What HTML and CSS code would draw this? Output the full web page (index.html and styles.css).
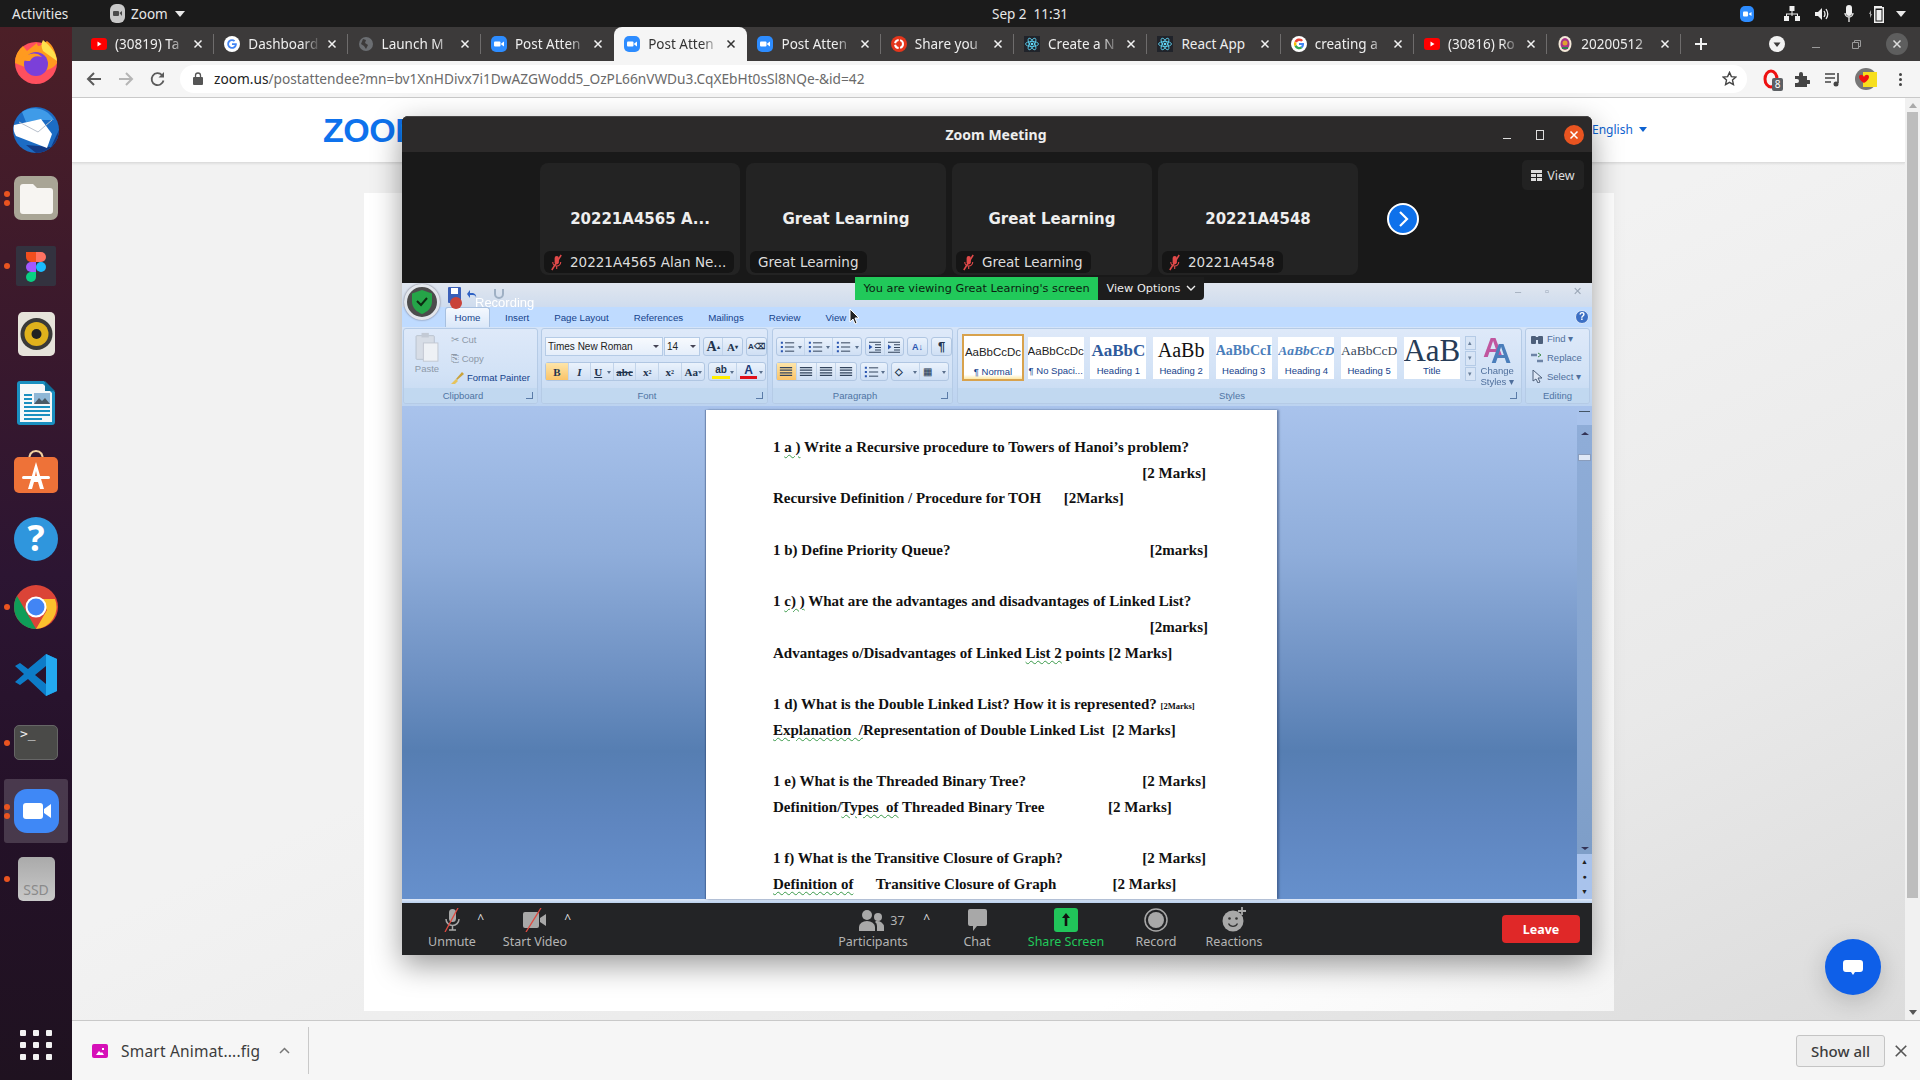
FILE: index.html
```html
<!DOCTYPE html>
<html lang="en">
<head>
    <meta charset="UTF-8">
    <title>Zoom Meeting</title>
    <link rel="stylesheet" href="styles.css">
</head>
<body>
<svg class="defs" width="0" height="0">
    <symbol id="i-x" viewBox="0 0 12 12"><path d="M2.500 2.500l7 7M9.500 2.500l-7 7" stroke="currentColor" stroke-width="1.500" fill="none"/></symbol>
    <symbol id="i-yt" viewBox="0 0 16 16"><rect y="2" width="16" height="12" rx="3" fill="#f00"/><path d="M6.500 5.500v5l4-2.500z" fill="#fff"/></symbol>
    <symbol id="i-g" viewBox="0 0 16 16"><circle cx="8" cy="8" r="8" fill="#fff"/><path d="M8 3.200a4.800 4.800 0 0 1 3.200 1.200l-1.300 1.300A3 3 0 1 0 10.900 9H8V7.200h4.800c.4 2.900-1.500 5.600-4.800 5.600A4.800 4.800 0 0 1 8 3.200z" fill="#4285f4"/></symbol>
    <symbol id="i-gc" viewBox="0 0 16 16"><circle cx="8" cy="8" r="8" fill="#fff"/><path d="M3.500 5.600A5 5 0 0 1 12 4.200l-1.500 1.400a3 3 0 0 0-4.600.9z" fill="#ea4335"/><path d="M3.500 5.600a5 5 0 0 0 0 4.800l2-1.500a3 3 0 0 1 0-1.800z" fill="#fbbc05"/><path d="M3.500 10.400a5 5 0 0 0 8 1.500l-1.800-1.300a3 3 0 0 1-4.200-1.700z" fill="#34a853"/><path d="M13 7H8v2h2.800a2.600 2.600 0 0 1-1.100 1.600l1.800 1.300C12.700 10.800 13.300 9 13 7z" fill="#4285f4"/></symbol>
    <symbol id="i-globe" viewBox="0 0 16 16"><circle cx="8" cy="8" r="7" fill="#6b6e72"/><path d="M5 3l3 1-1 3 3 2-2 4-2-3-3-2z" fill="#3c3a3a"/></symbol>
    <symbol id="i-zoom" viewBox="0 0 16 16"><rect width="16" height="16" rx="5" fill="#2d8cff"/><rect x="3" y="5.500" width="6.500" height="5" rx="1" fill="#fff"/><path d="M10.200 7.500l2.800-2v5l-2.800-2z" fill="#fff"/></symbol>
    <symbol id="i-share" viewBox="0 0 16 16"><circle cx="8" cy="8" r="8" fill="#e5361c"/><circle cx="8" cy="8" r="4" fill="none" stroke="#fff" stroke-width="2" stroke-dasharray="5 1.500"/></symbol>
    <symbol id="i-react" viewBox="0 0 16 16"><rect width="16" height="16" fill="#20232a"/><g fill="none" stroke="#61dafb" stroke-width=".8"><ellipse cx="8" cy="8" rx="6.500" ry="2.500"/><ellipse cx="8" cy="8" rx="6.500" ry="2.500" transform="rotate(60 8 8)"/><ellipse cx="8" cy="8" rx="6.500" ry="2.500" transform="rotate(120 8 8)"/></g><circle cx="8" cy="8" r="1.300" fill="#61dafb"/></symbol>
    <symbol id="i-crest" viewBox="0 0 16 16"><ellipse cx="8" cy="8" rx="6.500" ry="8" fill="#f4e9d8"/><ellipse cx="8" cy="8" rx="4.500" ry="6" fill="#a8348a"/><circle cx="8" cy="7" r="2.500" fill="#e0a030"/><rect x="5" y="11" width="6" height="2" fill="#2f7d4f"/></symbol>
    <symbol id="i-mute" viewBox="0 0 16 18"><rect x="6" y="2" width="4.500" height="9" rx="2.200" fill="#e24a4a"/><path d="M4 8.500a4.200 4.200 0 0 0 8.500 0M8.200 13v3" fill="none" stroke="#e24a4a" stroke-width="1.200"/><path d="M13 1L3 17" stroke="#e24a4a" stroke-width="1.600"/></symbol>
    <symbol id="i-lines" viewBox="0 0 16 12"><path d="M1 1.500h14M1 4.500h14M1 7.500h14M1 10.500h14" stroke="#33445c" stroke-width="1.400"/></symbol>
    <symbol id="i-list" viewBox="0 0 18 14"><path d="M6 2h11M6 7h11M6 12h11" stroke="#33445c" stroke-width="1.200"/><path d="M1 2h2.500M1 7h2.500M1 12h2.500" stroke="#2a55b0" stroke-width="2.400"/></symbol>
    <symbol id="i-indent" viewBox="0 0 16 14"><path d="M1 1.500h14M8 4.500h7M8 7.500h7M8 10.500h7M1 13h14" stroke="#33445c" stroke-width="1.200"/><path d="M1 4l4 3-4 3z" fill="#2a55b0"/></symbol>
</svg>

<div class="screen">
    <header class="topbar">
        <span class="activities">Activities</span>
        <span class="app-menu">
            <svg width="15" height="19" viewBox="0 0 15 19"><rect width="15" height="19" rx="6" fill="#c8c8c8"/><rect x="3" y="7" width="6" height="5" rx="1" fill="#4a4a4a"/><path d="M9.500 9l2.500-2v5z" fill="#4a4a4a"/></svg>
            Zoom <i class="caret"></i>
        </span>
        <span class="clock">Sep 2&nbsp;&nbsp;11:31</span>
        <span class="tray">
            <svg class="tray-zoom" width="14" height="16" viewBox="0 0 14 16"><rect width="14" height="16" rx="5" fill="#2d8cff"/><rect x="3" y="5.500" width="5" height="5" rx="1" fill="#fff"/><path d="M8.500 8l3-2v4z" fill="#fff"/></svg>
            <svg class="tray-net" width="16" height="15" viewBox="0 0 16 15" fill="#f0f0f0"><rect x="5.500" width="5" height="5"/><rect y="10" width="5" height="5"/><rect x="11" y="10" width="5" height="5"/><path d="M7.500 5h1v2.500h5.500V10h-1V8.500h-4.500V10h-1V8.500H3V10H2V7.500h5.500z"/></svg>
            <svg class="tray-vol" width="14" height="14" viewBox="0 0 14 14"><path d="M0 5h3l4-4v12l-4-4H0z" fill="#f0f0f0"/><path d="M9 4q2 3 0 6M11 2q3.500 5 0 10" fill="none" stroke="#f0f0f0" stroke-width="1.300"/></svg>
            <svg class="tray-mic" width="10" height="18" viewBox="0 0 10 18"><rect x="2" width="6" height="11" rx="3" fill="#f0f0f0"/><path d="M1 8a4 4 0 0 0 8 0M5 12v5" fill="none" stroke="#f0f0f0" stroke-width="1.300"/></svg>
            <svg class="tray-bat" width="18" height="18" viewBox="0 0 18 18"><path d="M5 1h8v1h2v16H5zM6.500 3.500v13h7v-13z" fill="#f0f0f0"/><rect x="7.500" y="5" width="5" height="10.500" fill="#f0f0f0"/><path d="M0 9l2-4v4h1l-2 4V9z" fill="#aaa"/></svg>
            <i class="caret"></i>
        </span>
    </header>

    <div class="desk">
        <nav class="dock">
            <div class="dock-slot">
                <svg width="46" height="46" viewBox="0 0 46 46"><circle cx="23" cy="24" r="21" fill="#ff4f5e"/><path d="M2 24a21 21 0 0 1 8-17l4 5 10-8c0 5 4 3 10-2 6 4 10 13 10 22-8 12-24 8-42 0z" fill="#ff9a1f"/><path d="M30 1c7 6 13 12 14 21L30 12c-2-4-2-8 0-11z" fill="#ffe14d"/><circle cx="23" cy="25" r="12" fill="#7b3fd9"/><path d="M8 20c6-6 16-8 21-2-6-2-10 0-12 4-3 0-6 0-9-2z" fill="#ff9a1f"/></svg>
            </div>
            <div class="dock-slot">
                <svg width="48" height="48" viewBox="0 0 48 48"><circle cx="24" cy="24" r="23" fill="#1c6cc4"/><path d="M10 6c8-6 24-6 32 8L26 14 14 16z" fill="#3f9be8"/><path d="M24 47a23 23 0 0 0 23-23l-8 17-25-2z" fill="#123a85"/><path d="M2 19l27-6 11 15-5 14-31-12c-2-3-3-7-2-11z" fill="#fff"/><path d="M7 16l19 10 14-12" fill="none" stroke="#b8c0cc" stroke-width="1"/></svg>
            </div>
            <div class="dock-slot">
                <i class="dot d1"></i><i class="dot d2"></i>
                <svg width="44" height="44" viewBox="0 0 44 44"><rect width="44" height="44" rx="7" fill="#a9a596"/><path d="M6 11q0-3 3-3h10l4 4h13q3 0 3 3v20q0 3-3 3H9q-3 0-3-3z" fill="#f7f5f2"/></svg>
            </div>
            <div class="dock-slot">
                <i class="dot d0"></i>
                <svg width="40" height="40" viewBox="0 0 40 40"><rect width="40" height="40" rx="2" fill="#33323f"/><path d="M10 6h10v10H15a5 5 0 0 1-5-5z" fill="#f24e1e"/><path d="M20 6h5a5 5 0 0 1 0 10h-5z" fill="#ff7262"/><circle cx="15" cy="21" r="5" fill="#a259ff"/><rect x="15" y="16" width="5" height="10" fill="#a259ff"/><circle cx="25" cy="21" r="5" fill="#1abcfe"/><path d="M15 26h5v5a5 5 0 1 1-5-5z" fill="#0acf83"/></svg>
            </div>
            <div class="dock-slot">
                <svg width="37" height="44" viewBox="0 0 37 44"><rect width="37" height="44" rx="5" fill="#e6e3da"/><circle cx="18.500" cy="22" r="16" fill="#3a3a38"/><circle cx="18.500" cy="22" r="12" fill="#e0b21c"/><circle cx="18.500" cy="22" r="5" fill="#222"/></svg>
            </div>
            <div class="dock-slot">
                <svg width="38" height="44" viewBox="0 0 38 44"><path d="M3 0h24l11 11v30q0 3-3 3H3q-3 0-3-3V3q0-3 3-3z" fill="#1a8fc0"/><path d="M3 3h23l9 9v29H3z" fill="#f6f8f9"/><path d="M28 0l10 10H28z" fill="#0f6e99"/><path d="M7 14h8M7 18h8M7 22h8M7 26h26M7 30h26M7 34h26M7 38h18" stroke="#1a8fc0" stroke-width="2"/><rect x="17" y="12" width="16" height="11" fill="#8fb7d6"/><path d="M17 23l5-6 3 3 3-3 5 6z" fill="#4a5a66"/></svg>
            </div>
            <div class="dock-slot">
                <svg width="44" height="44" viewBox="0 0 44 44"><path d="M15 12q0-10 7-10t7 10" fill="none" stroke="#f2d2a0" stroke-width="2"/><rect y="8" width="44" height="36" rx="5" fill="#ee7238"/><path d="M22 13l-8 27h4l2-7h4l2 7h4zM21 27l1-5 1 5z" fill="#fff"/><rect x="8" y="27" width="28" height="3" rx="1.500" fill="#fff"/></svg>
            </div>
            <div class="dock-slot">
                <svg width="44" height="44" viewBox="0 0 44 44"><circle cx="22" cy="22" r="22" fill="#2f96dd"/><text x="22" y="34" class="help-mark">?</text></svg>
            </div>
            <div class="dock-slot">
                <i class="dot d0"></i>
                <svg width="44" height="44" viewBox="0 0 44 44"><circle cx="22" cy="22" r="22" fill="#db4437"/><path d="M22 44a22 22 0 0 1-19-33l11 19z" fill="#0f9d58"/><path d="M22 44l11-19-11-11h19a22 22 0 0 1-19 30z" fill="#fbc02d"/><circle cx="22" cy="22" r="10.500" fill="#fff"/><circle cx="22" cy="22" r="8.500" fill="#4285f4"/></svg>
            </div>
            <div class="dock-slot">
                <svg width="44" height="42" viewBox="0 0 44 42"><path d="M32 0l11 5v32l-11 5-18-17-8 6-5-3 9-8-9-8 5-3 8 6zM32 12L21 21l11 9z" fill="#0d7cc8"/><path d="M32 0l11 5v32l-11 5z" fill="#23a9f0"/></svg>
            </div>
            <div class="dock-slot">
                <i class="dot d0"></i>
                <div class="term">&gt;_</div>
            </div>
            <div class="dock-slot dock-active">
                <i class="dot d1"></i><i class="dot d2"></i>
                <svg width="45" height="44" viewBox="0 0 45 44"><rect width="45" height="44" rx="13" fill="#3f88f6"/><rect x="9" y="14" width="20" height="16" rx="3" fill="#fff"/><path d="M30 20l7-5v14l-7-5z" fill="#fff"/></svg>
            </div>
            <div class="dock-slot">
                <i class="dot d0"></i>
                <div class="ssd">SSD</div>
            </div>
            <div class="apps-grid">
                <i></i><i></i><i></i><i></i><i></i><i></i><i></i><i></i><i></i>
            </div>
        </nav>

        <div class="browser">
            <div class="tabstrip">
                <div class="tab"><svg class="fav"><use href="#i-yt"/></svg><span class="tab-title">(30819) Ta</span><svg class="tab-x"><use href="#i-x"/></svg></div>
                <div class="tab"><svg class="fav"><use href="#i-g"/></svg><span class="tab-title">Dashboard</span><svg class="tab-x"><use href="#i-x"/></svg></div>
                <div class="tab"><svg class="fav"><use href="#i-globe"/></svg><span class="tab-title">Launch M</span><svg class="tab-x"><use href="#i-x"/></svg></div>
                <div class="tab no-sep"><svg class="fav"><use href="#i-zoom"/></svg><span class="tab-title">Post Atten</span><svg class="tab-x"><use href="#i-x"/></svg></div>
                <div class="tab tab-active"><svg class="fav"><use href="#i-zoom"/></svg><span class="tab-title">Post Atten</span><svg class="tab-x"><use href="#i-x"/></svg></div>
                <div class="tab"><svg class="fav"><use href="#i-zoom"/></svg><span class="tab-title">Post Atten</span><svg class="tab-x"><use href="#i-x"/></svg></div>
                <div class="tab"><svg class="fav"><use href="#i-share"/></svg><span class="tab-title">Share you</span><svg class="tab-x"><use href="#i-x"/></svg></div>
                <div class="tab"><svg class="fav"><use href="#i-react"/></svg><span class="tab-title">Create a N</span><svg class="tab-x"><use href="#i-x"/></svg></div>
                <div class="tab"><svg class="fav"><use href="#i-react"/></svg><span class="tab-title tab-full">React App</span><svg class="tab-x"><use href="#i-x"/></svg></div>
                <div class="tab"><svg class="fav"><use href="#i-gc"/></svg><span class="tab-title">creating a</span><svg class="tab-x"><use href="#i-x"/></svg></div>
                <div class="tab"><svg class="fav"><use href="#i-yt"/></svg><span class="tab-title">(30816) Ro</span><svg class="tab-x"><use href="#i-x"/></svg></div>
                <div class="tab"><svg class="fav"><use href="#i-crest"/></svg><span class="tab-title">20200512</span><svg class="tab-x"><use href="#i-x"/></svg></div>
                <svg class="new-tab" width="14" height="14" viewBox="0 0 14 14"><path d="M7 1v12M1 7h12" stroke="#f2f2f2" stroke-width="2"/></svg>
                <div class="win-btns">
                    <svg width="16" height="16" viewBox="0 0 16 16"><circle cx="8" cy="8" r="8" fill="#f2f2f2"/><path d="M4.500 6.500h7L8 11z" fill="#3c3a3a"/></svg>
                    <span class="wb-min"></span>
                    <svg class="wb-restore" width="9" height="9" viewBox="0 0 9 9"><path d="M.5 2.500h6v6h-6zM2.500 2.500v-2h6v6h-2" fill="none" stroke="#9a9a9a"/></svg>
                    <span class="wb-close"><svg width="12" height="12"><use href="#i-x"/></svg></span>
                </div>
            </div>

            <div class="toolbar">
                <svg class="tool-back" width="16" height="16" viewBox="0 0 16 16"><path d="M15 8H2M8 2L2 8l6 6" fill="none" stroke="#5a5a5a" stroke-width="2"/></svg>
                <svg class="tool-fwd" width="16" height="16" viewBox="0 0 16 16"><path d="M1 8h13M8 2l6 6-6 6" fill="none" stroke="#b5b5b5" stroke-width="2"/></svg>
                <svg class="tool-reload" width="16" height="16" viewBox="0 0 16 16"><path d="M13.500 9.500A6 6 0 1 1 12 4" fill="none" stroke="#5a5a5a" stroke-width="1.800"/><path d="M14 1v5.500H8.500z" fill="#5a5a5a"/></svg>
                <div class="omnibox">
                    <svg class="lock" width="10" height="13" viewBox="0 0 10 13"><path d="M2.500 5V3.500a2.500 2.500 0 0 1 5 0V5" fill="none" stroke="#555" stroke-width="1.300"/><rect y="5" width="10" height="8" rx="1" fill="#555"/></svg>
                    <span class="url"><b>zoom.us</b>/postattendee?mn=bv1XnHDivx7i1DwAZGWodd5_OzPL66nVWDu3.CqXEbHt0sSl8NQe-&amp;id=42</span>
                    <svg class="star" width="15" height="15" viewBox="0 0 16 16"><path d="M8 1.500l2 4.500 4.800.5-3.600 3.200 1 4.800L8 12.100l-4.200 2.400 1-4.800L1.200 6.500 6 6z" fill="none" stroke="#444" stroke-width="1.500"/></svg>
                </div>
                <div class="extensions">
                    <span class="ext-opera"><svg width="16" height="20" viewBox="0 0 16 20"><ellipse cx="8" cy="10" rx="6" ry="8" fill="none" stroke="#e11" stroke-width="3"/></svg><em>8</em></span>
                    <svg width="16" height="16" viewBox="0 0 16 16"><path d="M1 5h4V3a2 2 0 0 1 4 0v2h4v4h2a2 2 0 0 1 0 4h-2v3H1v-4h2a2 2 0 0 0 0-4H1z" fill="#444"/></svg>
                    <svg width="16" height="15" viewBox="0 0 16 15"><path d="M0 2h10M0 6h10M0 10h6" stroke="#444" stroke-width="1.600"/><path d="M13 1v10" stroke="#444" stroke-width="1.600"/><circle cx="11" cy="12" r="2.500" fill="#444"/></svg>
                    <span class="ext-avatar"><svg width="22" height="22" viewBox="0 0 22 22"><circle cx="11" cy="11" r="11" fill="#777"/><rect x="8" y="4" width="14" height="15" fill="#f7df1e"/><path d="M4 9c0-3 4-3 5 0 1-3 5-3 5 0 0 3-5 6-5 6s-5-3-5-6z" fill="#e11"/></svg></span>
                    <span class="ext-dots"><i></i><i></i><i></i></span>
                </div>
            </div>

            <main class="page">
                <div class="page-head">
                    <span class="zoom-logo">ZOOM</span>
                    <span class="lang">English <i class="lang-caret"></i></span>
                </div>
                <div class="page-body"><div class="card"></div></div>
                <div class="scrollbar"><i class="sb-up"></i><div class="sb-thumb"></div><i class="sb-down"></i></div>
                <div class="chat-fab"><svg width="20" height="15" viewBox="0 0 20 15"><path d="M3 0h14q3 0 3 3v6q0 3-3 3h-5l-2 3-2-3H3q-3 0-3-3V3q0-3 3-3z" fill="#fff"/></svg></div>
            </main>

            <div class="shelf">
                <div class="dl-item">
                    <svg width="16" height="14" viewBox="0 0 16 14"><rect width="16" height="14" rx="2" fill="#d610b8"/><path d="M4 11l3-4 2 2 1-1 2 3zM10 4h2v2h-2z" fill="#fff"/></svg>
                    <span class="dl-name">Smart Animat....fig</span>
                    <svg class="dl-caret" width="11" height="7" viewBox="0 0 11 7"><path d="M1 6l4.500-4.500L10 6" fill="none" stroke="#777" stroke-width="1.500"/></svg>
                </div>
                <button class="show-all">Show all</button>
                <svg class="shelf-x" width="14" height="14" viewBox="0 0 12 12"><path d="M1.500 1.500l9 9M10.500 1.500l-9 9" stroke="#555" stroke-width="1.400"/></svg>
            </div>
        </div>
    </div>

    <!-- zoom client window, floats over the browser -->
    <section class="zwin">
        <div class="zwin-title">
            <span class="zwin-name">Zoom Meeting</span>
            <span class="zwin-min"></span>
            <span class="zwin-max"></span>
            <span class="zwin-close"><svg width="12" height="12"><use href="#i-x"/></svg></span>
        </div>

        <div class="gallery">
            <div class="tile">
                <div class="tile-name">20221A4565 A...</div>
                <div class="tile-tag"><svg width="15" height="17"><use href="#i-mute"/></svg>20221A4565 Alan Ne...</div>
            </div>
            <div class="tile">
                <div class="tile-name">Great Learning</div>
                <div class="tile-tag">Great Learning</div>
            </div>
            <div class="tile">
                <div class="tile-name">Great Learning</div>
                <div class="tile-tag"><svg width="15" height="17"><use href="#i-mute"/></svg>Great Learning</div>
            </div>
            <div class="tile">
                <div class="tile-name">20221A4548</div>
                <div class="tile-tag"><svg width="15" height="17"><use href="#i-mute"/></svg>20221A4548</div>
            </div>
            <div class="next-page"><svg width="14" height="18" viewBox="0 0 14 18"><path d="M3 2l7 7-7 7" fill="none" stroke="#fff" stroke-width="2.200"/></svg></div>
            <div class="view-btn"><svg width="11" height="11" viewBox="0 0 11 11" fill="#ddd"><rect width="11" height="3"/><rect y="4" width="5" height="3"/><rect x="6" y="4" width="5" height="3"/><rect y="8" width="5" height="3"/><rect x="6" y="8" width="5" height="3"/></svg>View</div>
        </div>

        <div class="share">
            <div class="share-video">
                <div class="w-title">
                    <div class="office-btn"><svg width="22" height="24" viewBox="0 0 22 24"><path d="M11 0l10 3.500v8C21 18 16 22 11 24 6 22 1 18 1 11.500v-8z" fill="#25a548"/><path d="M6 11l4 4 6-7" fill="none" stroke="#0c2a12" stroke-width="2"/></svg></div>
                    <div class="qat">
                        <svg width="13" height="18" viewBox="0 0 13 18"><rect width="13" height="16" rx="1" fill="#3a5fb8"/><rect x="3" y="1" width="7" height="6" fill="#fff"/></svg>
                        <svg width="12" height="12" viewBox="0 0 12 12"><path d="M1 7l3-4v3h3a4 4 0 0 1 3 5 3 3 0 0 0-3-3H4v3z" fill="#2f62c4"/></svg>
                        <svg class="qat-redo" width="12" height="12" viewBox="0 0 12 12"><path d="M2 2v5a4 4 0 0 0 8 0V2" fill="none" stroke="#9fb0c4" stroke-width="2"/></svg>
                    </div>
                    <div class="rec"><i></i>Recording</div>
                    <div class="w-ctrl"><span>–</span><span>▫</span><span>✕</span></div>
                </div>

                <div class="w-tabs">
                    <span class="w-tab w-tab-on">Home</span>
                    <span class="w-tab">Insert</span>
                    <span class="w-tab">Page Layout</span>
                    <span class="w-tab">References</span>
                    <span class="w-tab">Mailings</span>
                    <span class="w-tab">Review</span>
                    <span class="w-tab">View</span>
                    <span class="w-help">?</span>
                </div>

                <div class="ribbon">
                    <div class="grp grp-clip">
                        <div class="grp-body clip-body">
                            <div class="paste">
                                <svg width="26" height="31" viewBox="0 0 26 34"><rect x="1" y="4" width="20" height="26" rx="1" fill="#d7dde6" stroke="#b8c0cc"/><rect x="7" y="1" width="8" height="5" fill="#c3cad5"/><rect x="9" y="12" width="16" height="20" fill="#eef1f5" stroke="#c0c6d0"/></svg>
                                <span>Paste</span>
                            </div>
                            <div class="clip-list">
                                <span class="off">✂ Cut</span>
                                <span class="off">⎘ Copy</span>
                                <span><svg width="13" height="13" viewBox="0 0 13 13"><path d="M5 8l6-7 2 2-7 6z" fill="#c9a23a"/><path d="M0 13l5-5 2 2-3 3z" fill="#e6c35c"/></svg> Format Painter</span>
                            </div>
                        </div>
                        <div class="grp-label lab-l">Clipboard<i class="launcher"></i></div>
                    </div>

                    <div class="grp grp-font">
                        <div class="grp-body tools">
                            <div class="tool-row">
                                <span class="combo combo-font">Times New Roman<i></i></span>
                                <span class="combo combo-size">14<i></i></span>
                                <span class="btns"><b class="big-a">A<sup>▴</sup></b><b class="small-a">A<sup>▾</sup></b></span>
                                <span class="btns"><b class="clear-f">A⌫</b></span>
                            </div>
                            <div class="tool-row">
                                <span class="btns w23">
                                    <b class="on serif">B</b><b class="serif it">I</b><b class="serif un dd">U</b><b class="serif st">abc</b><b class="serif">x<sub>2</sub></b><b class="serif">x<sup>2</sup></b><b class="serif dd">Aa</b>
                                </span>
                                <span class="btns w28">
                                    <b class="hl dd"><span>ab</span></b><b class="fc dd"><span>A</span></b>
                                </span>
                            </div>
                        </div>
                        <div class="grp-label lab-l">Font<i class="launcher"></i></div>
                    </div>

                    <div class="grp grp-para">
                        <div class="grp-body tools">
                            <div class="tool-row">
                                <span class="btns w28"><b class="dd"><svg width="15" height="12"><use href="#i-list"/></svg></b><b class="dd"><svg width="15" height="12"><use href="#i-list"/></svg></b><b class="dd"><svg width="15" height="12"><use href="#i-list"/></svg></b></span>
                                <span class="btns w18"><b><svg width="14" height="12"><use href="#i-indent"/></svg></b><b><svg width="14" height="12"><use href="#i-indent"/></svg></b></span>
                                <span class="btns"><b class="sort">A↓</b></span>
                                <span class="btns"><b class="pilcrow">¶</b></span>
                            </div>
                            <div class="tool-row">
                                <span class="btns w20"><b class="on"><svg width="14" height="11"><use href="#i-lines"/></svg></b><b><svg width="14" height="11"><use href="#i-lines"/></svg></b><b><svg width="14" height="11"><use href="#i-lines"/></svg></b><b><svg width="14" height="11"><use href="#i-lines"/></svg></b></span>
                                <span class="btns w26"><b class="dd"><svg width="15" height="12"><use href="#i-list"/></svg></b></span>
                                <span class="btns w28"><b class="shade dd">◇</b><b class="border-b dd">▦</b></span>
                            </div>
                        </div>
                        <div class="grp-label lab-l">Paragraph<i class="launcher"></i></div>
                    </div>

                    <div class="grp grp-styles">
                        <div class="grp-body styles-body">
                            <div class="style-tile st-sel"><span class="s-sample s-plain">AaBbCcDc</span><span class="s-name">¶ Normal</span></div>
                            <div class="style-tile"><span class="s-sample s-plain">AaBbCcDc</span><span class="s-name">¶ No Spaci...</span></div>
                            <div class="style-tile"><span class="s-sample s-h1">AaBbC</span><span class="s-name">Heading 1</span></div>
                            <div class="style-tile"><span class="s-sample s-h2">AaBb</span><span class="s-name">Heading 2</span></div>
                            <div class="style-tile"><span class="s-sample s-h3">AaBbCcI</span><span class="s-name">Heading 3</span></div>
                            <div class="style-tile"><span class="s-sample s-h4">AaBbCcD</span><span class="s-name">Heading 4</span></div>
                            <div class="style-tile"><span class="s-sample s-h5">AaBbCcD</span><span class="s-name">Heading 5</span></div>
                            <div class="style-tile"><span class="s-sample s-title">AaB</span><span class="s-name">Title</span></div>
                            <div class="style-scroll"><i>▴</i><i>▾</i><i>▾</i></div>
                            <div class="change-styles">
                                <svg width="30" height="32" viewBox="0 0 30 32"><text x="1" y="24" class="cs-a">A</text><text x="9" y="30" class="cs-b">A</text></svg>
                                <span>Change<br>Styles ▾</span>
                            </div>
                        </div>
                        <div class="grp-label lab-l">Styles<i class="launcher"></i></div>
                    </div>

                    <div class="grp grp-edit">
                        <div class="grp-body edit-list">
                            <span><svg width="14" height="12" viewBox="0 0 14 12" fill="#4d5f7a"><rect x="1" y="3" width="5" height="8" rx="1"/><rect x="8" y="3" width="5" height="8" rx="1"/><rect x="5" y="4" width="4" height="3"/></svg>Find ▾</span>
                            <span><svg width="14" height="12" viewBox="0 0 14 12"><path d="M1 3h6M7 9h6" stroke="#6d84a6" stroke-width="2.500"/><path d="M8 1l3 2-3 2" fill="none" stroke="#3f8a4a"/></svg>Replace</span>
                            <span><svg width="14" height="13" viewBox="0 0 14 13"><path d="M3 0v11l3-2 2 4 2-1-2-4h4z" fill="#dfe8f6" stroke="#4d5f7a"/></svg>Select ▾</span>
                        </div>
                        <div class="grp-label">Editing</div>
                    </div>
                </div>

                <div class="w-work">
                    <div class="doc">
                        <p>1 <span class="sq">a )</span> Write a Recursive procedure to Towers of Hanoi’s problem?</p>
                        <p class="right r2">[2 Marks]</p>
                        <p>Recursive Definition / Procedure for TOH      [2Marks]</p>
                        <p>&nbsp;</p>
                        <p class="spread"><span>1 b) Define Priority Queue?</span><span>[2marks]</span></p>
                        <p>&nbsp;</p>
                        <p>1 <span class="sq">c) )</span> What are the advantages and disadvantages of Linked List?</p>
                        <p class="right">[2marks]</p>
                        <p>Advantages o/Disadvantages of Linked <span class="sq">List 2</span> points [2 Marks]</p>
                        <p>&nbsp;</p>
                        <p>1 d) What is the Double Linked List? How it is represented? <small>[2Marks]</small></p>
                        <p><span class="sq">Explanation  /</span>Representation of Double Linked List  [2 Marks]</p>
                        <p>&nbsp;</p>
                        <p class="spread r2"><span>1 e) What is the Threaded Binary Tree?</span><span>[2 Marks]</span></p>
                        <p>Definition/<span class="sq">Types  of</span> Threaded Binary Tree                 [2 Marks]</p>
                        <p>&nbsp;</p>
                        <p class="spread r2"><span>1 f) What is the Transitive Closure of Graph?</span><span>[2 Marks]</span></p>
                        <p><span class="sq">Definition of</span>      Transitive Closure of Graph               [2 Marks]</p>
                    </div>
                    <div class="w-scroll">
                        <i class="ws-split"></i>
                        <div class="ws-track"><i class="ws-up"></i><i class="ws-thumb"></i><i class="ws-down"></i></div>
                        <div class="ws-nav"><i>▲</i><i>●</i><i>▼</i></div>
                    </div>
                </div>
                <div class="w-status"></div>
            </div>

            <div class="share-bar">
                <span class="share-msg">You are viewing Great Learning's screen</span>
                <span class="share-opts">View Options <svg width="10" height="7" viewBox="0 0 10 7"><path d="M1 1l4 4 4-4" fill="none" stroke="#eee" stroke-width="1.400"/></svg></span>
            </div>
            <svg class="cursor" width="12" height="18" viewBox="0 0 12 18"><path d="M1 1v13l3-3 2 5 2-1-2-5h4z" fill="#222" stroke="#fff"/></svg>
        </div>

        <div class="zbar">
            <div class="zb-item zb-mic">
                <svg width="20" height="24" viewBox="0 0 20 24"><rect x="7" y="1" width="7" height="13" rx="3.500" fill="#a8a8a8"/><path d="M4 11a6.500 6.500 0 0 0 13 0M10.500 18v4M7 22h7" fill="none" stroke="#a8a8a8" stroke-width="1.500"/><path d="M16 0L3 24" stroke="#e0483f" stroke-width="1.300"/></svg>
                <span>Unmute</span><i class="zb-caret">^</i>
            </div>
            <div class="zb-item zb-video">
                <svg width="26" height="24" viewBox="0 0 26 24"><rect x="1" y="4" width="16" height="16" rx="2" fill="#a8a8a8"/><path d="M18 10l6-4v12l-6-4z" fill="#a8a8a8"/><path d="M19 0L4 24" stroke="#e0483f" stroke-width="1.300"/></svg>
                <span>Start Video</span><i class="zb-caret">^</i>
            </div>
            <div class="zb-item zb-part">
                <div class="zb-part-icon">
                    <svg width="26" height="22" viewBox="0 0 26 22" fill="#a8a8a8"><circle cx="8" cy="6" r="5"/><path d="M0 22v-4a8 6 0 0 1 16 0v4z"/><circle cx="19" cy="8" r="4"/><path d="M17 12a7 6 0 0 1 8 6v4h-7v-5q0-3-2-4z"/></svg>
                    <em>37</em>
                </div>
                <span>Participants</span><i class="zb-caret">^</i>
            </div>
            <div class="zb-item zb-chat">
                <svg width="21" height="24" viewBox="0 0 21 24"><path d="M3 1h15q2 0 2 2v13q0 2-2 2H10l-4 5v-5H3q-2 0-2-2V3q0-2 2-2z" fill="#a8a8a8"/></svg>
                <span>Chat</span>
            </div>
            <div class="zb-item zb-screen">
                <svg width="24" height="24" viewBox="0 0 24 24"><rect width="24" height="24" rx="3" fill="#21c55a"/><path d="M12 5l4 5h-2.700v8h-2.600v-8H8z" fill="#111"/></svg>
                <span>Share Screen</span>
            </div>
            <div class="zb-item zb-rec">
                <svg width="24" height="24" viewBox="0 0 24 24"><circle cx="12" cy="12" r="11" fill="none" stroke="#a8a8a8" stroke-width="1.500"/><circle cx="12" cy="12" r="8" fill="#a8a8a8"/></svg>
                <span>Record</span>
            </div>
            <div class="zb-item zb-react">
                <svg width="27" height="26" viewBox="0 0 27 26"><circle cx="12" cy="15" r="10.500" fill="#a8a8a8"/><circle cx="8.500" cy="12.500" r="1.300" fill="#333"/><circle cx="15.500" cy="12.500" r="1.300" fill="#333"/><path d="M7.500 17.500a5 5 0 0 0 9 0" fill="none" stroke="#333" stroke-width="1.300"/><path d="M21 1v8M17 5h8" stroke="#a8a8a8" stroke-width="1.800"/></svg>
                <span>Reactions</span>
            </div>
            <button class="leave">Leave</button>
        </div>
    </section>
</div>
</body>
</html>
```

FILE: styles.css
```css
* { box-sizing: border-box; }
html, body { margin: 0; padding: 0; }
body { font-family: "Noto Sans", "Open Sans", sans-serif; background: #222; overflow: hidden; }
.defs { position: absolute; }
svg { display: block; }
i, em { font-style: normal; }

.screen { width: 1920px; height: 1080px; position: relative; display: flex; flex-direction: column; overflow: hidden; }

/* gnome top bar */
.topbar { height: 27px; flex: none; background: #1b1b1b; color: #e8e8e8; font-size: 13.500px; display: flex; align-items: center; padding-left: 12px; position: relative; }
.activities { width: 98px; }
.app-menu { display: flex; align-items: center; gap: 6px; }
.caret { display: inline-block; width: 0; height: 0; border: 5px solid transparent; border-top: 6px solid #e8e8e8; border-bottom: 0; margin-left: 1px; }
.clock { position: absolute; left: 992px; }
.tray { margin-left: auto; display: flex; align-items: center; height: 27px; padding-right: 14px; }
.tray-zoom { margin-right: 30px; }
.tray-net { margin-right: 15px; }
.tray-vol { margin-right: 15px; }
.tray-mic { margin-right: 15px; }
.tray-bat { margin-right: 8px; }

.desk { flex: 1; display: flex; min-height: 0; }

/* dock */
.dock { width: 72px; flex: none; background: linear-gradient(180deg, #4c1f27 0%, #3e1a2b 22%, #2c1532 52%, #241128 75%, #1f1220 100%); display: flex; flex-direction: column; padding-top: 1px; position: relative; }
.dock-slot { height: 68.100px; flex: none; display: flex; align-items: center; justify-content: center; position: relative; }
.dock-active::before { content: ""; position: absolute; left: 4px; right: 4px; top: 2px; bottom: 2px; background: rgba(255,255,255,.17); border-radius: 3px; }
.dock-slot svg, .dock-slot div { position: relative; }
.dot { position: absolute; left: 4px; width: 6px; height: 6px; border-radius: 50%; background: #e95420; z-index: 1; }
.d0 { top: 31px; }
.d1 { top: 27px; }
.d2 { top: 36px; }
.help-mark { font: bold 36px "Open Sans", sans-serif; fill: #fff; text-anchor: middle; }
.term { width: 44px; height: 35px; background: #4a4a48; border: 1px solid #666; border-radius: 5px; color: #eee; font: 13px/14px "DejaVu Sans Mono", monospace; padding: 1px 0 0 5px; }
.ssd { width: 37px; height: 44px; background: linear-gradient(#aaa, #c9c9c9); border-radius: 5px; color: #8a8a8a; font-size: 14px; text-align: center; padding-top: 24px; line-height: 18px; }
.apps-grid { position: absolute; left: 20px; top: 1003px; width: 32px; display: grid; grid-template-columns: repeat(3, 6px); gap: 6px 7px; justify-content: space-between; }
.apps-grid i { width: 6px; height: 6px; background: #f2f2f2; border-radius: 1px; }

/* chrome */
.browser { flex: 1; min-width: 0; display: flex; flex-direction: column; }
.tabstrip { height: 34px; flex: none; background: #3c3a3a; display: flex; align-items: stretch; padding-left: 9px; position: relative; }
.tab { width: 133.300px; flex: none; display: flex; align-items: center; padding: 0 10px; color: #eee; font-size: 13.500px; position: relative; }
.tab::after { content: ""; position: absolute; right: 0; top: 7px; bottom: 7px; width: 1px; background: #6e6c6c; }
.no-sep::after { display: none; }
.tab-active { background: #f5f5f5; color: #333; border-radius: 8px 8px 0 0; }
.tab-active::after { display: none; }
.fav { width: 16px; height: 16px; flex: none; margin-right: 8px; }
.tab-title { flex: 1; min-width: 0; white-space: nowrap; overflow: hidden; -webkit-mask-image: linear-gradient(90deg, #000 75%, transparent); mask-image: linear-gradient(90deg, #000 75%, transparent); }
.tab-full { -webkit-mask-image: none; mask-image: none; }
.tab-x { width: 12px; height: 12px; flex: none; margin-left: 5px; color: #f2f2f2; }
.tab-active .tab-x { color: #333; }
.new-tab { align-self: center; margin-left: 13px; }
.win-btns { margin-left: auto; display: flex; align-items: center; padding-right: 12px; }
.win-btns > svg:first-child { margin-right: 27px; }
.wb-min { width: 8px; height: 1px; background: #9a9a9a; margin: 7px 32px 0 0; }
.wb-restore { margin-right: 25px; }
.wb-close { width: 22px; height: 22px; border-radius: 50%; background: #5e5e5e; color: #ddd; display: flex; align-items: center; justify-content: center; }

.toolbar { height: 37px; flex: none; background: #f5f5f5; border-bottom: 1px solid #c9c9c9; display: flex; align-items: center; padding-left: 14px; }
.tool-back { margin-right: 16px; }
.tool-fwd { margin-right: 16px; }
.tool-reload { margin-right: 14px; }
.omnibox { width: 1567px; height: 28px; background: #fff; border-radius: 14px; display: flex; align-items: center; padding: 0 10px 0 13px; margin-top: -1px; }
.lock { margin-right: 11px; }
.url { font-size: 13.700px; color: #6a6a6a; white-space: nowrap; flex: 1; }
.url b { color: #222; font-weight: 400; }
.extensions { display: flex; align-items: center; gap: 15px; margin-left: 16px; }
.ext-opera { position: relative; display: block; width: 16px; height: 20px; }
.ext-opera em { position: absolute; left: 9px; top: 9px; background: #5c5f63; color: #fff; font-size: 10px; line-height: 13px; width: 11px; text-align: center; border-radius: 2px; }
.ext-avatar { margin-left: -1px; }
.ext-dots { display: flex; flex-direction: column; gap: 2px; margin-left: 7px; }
.ext-dots i { width: 3px; height: 3px; border-radius: 50%; background: #444; }

/* page under the zoom window */
.page { flex: 1; min-height: 0; position: relative; display: flex; flex-direction: column; overflow: hidden; background: #fff; }
.page-head { height: 65px; flex: none; background: #fff; border-bottom: 1px solid #ddd; box-shadow: 0 1px 2px rgba(0,0,0,.08); position: relative; margin-right: 15px; z-index: 1; display: flex; align-items: center; }
.zoom-logo { position: absolute; left: 251px; top: 12px; color: #0e72ed; font: bold 34px/40px "Liberation Sans", sans-serif; letter-spacing: -.5px; }
.lang { position: absolute; left: 1520px; top: 23px; color: #0e62d0; font-size: 12px; display: flex; align-items: center; gap: 6px; }
.lang-caret { width: 0; height: 0; border: 4px solid transparent; border-top: 5px solid #0e62d0; border-bottom: 0; }
.page-body { flex: 1; margin-right: 15px; background: linear-gradient(155deg, #f2f2f2 45%, #e9e9e9 75%, #dcdcdc 100%); padding: 30px 0 0 292px; }
.card { width: 1250px; height: 818px; background: linear-gradient(135deg, #fff 75%, #f5f5f5); }
.scrollbar { position: absolute; right: 0; top: 0; bottom: 0; width: 15px; background: #f1f1f1; display: flex; flex-direction: column; align-items: center; z-index: 2; }
.sb-up { width: 0; height: 0; margin: 5px 0 4px; border: 4px solid transparent; border-bottom: 5px solid #aaa; border-top: 0; }
.sb-thumb { width: 11px; height: 786px; background: #bdbdbd; }
.sb-down { width: 0; height: 0; margin-top: auto; margin-bottom: 5px; border: 4px solid transparent; border-top: 5px solid #555; border-bottom: 0; }
.chat-fab { position: absolute; left: 1753px; top: 841px; width: 56px; height: 56px; border-radius: 50%; background: #0e5fe8; box-shadow: 0 6px 24px rgba(0,0,0,.18); display: flex; align-items: center; justify-content: center; z-index: 3; }

.shelf { height: 60px; flex: none; background: #f6f6f6; border-top: 1px solid #c9c9c9; display: flex; align-items: center; position: relative; }
.dl-item { width: 237px; height: 47px; border-right: 1px solid #c9c9c9; display: flex; align-items: center; padding-left: 20px; color: #3c3c3c; font-size: 15.500px; }
.dl-name { margin-left: 13px; width: 143px; white-space: nowrap; letter-spacing: .2px; }
.dl-caret { margin-left: 15px; }
.show-all { margin-left: auto; margin-right: 9px; width: 89px; height: 32px; border: 1px solid #c4c4c4; border-radius: 3px; background: #eee; color: #3c3c3c; font: 500 15px "Noto Sans", sans-serif; padding: 0; }
.shelf-x { margin-right: 12px; }

/* zoom window */
.zwin { position: absolute; left: 402px; top: 116px; z-index: 10; width: 1190px; height: 839px; background: #181818; border-radius: 6px 6px 0 0; box-shadow: 0 10px 30px rgba(0,0,0,.4); display: flex; flex-direction: column; }
.zwin-title { height: 36px; flex: none; background: #2c2a2a; border-top: 1px solid #484646; border-radius: 6px 6px 0 0; position: relative; display: flex; align-items: center; justify-content: flex-end; color: #eee; padding-right: 8px; }
.zwin-name { position: absolute; left: 0; right: 0; text-align: center; font-size: 14px; font-weight: 700; margin-left: -2px; }
.zwin-min { width: 8px; height: 1px; background: #ddd; margin: 8px 25px 0 0; position: relative; }
.zwin-max { width: 8px; height: 10px; border: 1px solid #ddd; margin-right: 20px; position: relative; }
.zwin-close { width: 20px; height: 20px; border-radius: 50%; background: #e95420; color: #fff; display: flex; align-items: center; justify-content: center; position: relative; }

.gallery { height: 131px; flex: none; display: flex; align-items: flex-start; gap: 6px; padding: 11px 0 0 138px; position: relative; background: #191919; }
.tile { width: 200px; height: 112px; background: #232323; border-radius: 8px; position: relative; color: #eee; font-family: "DejaVu Sans", sans-serif; }
.tile-name { text-align: center; font-size: 15px; font-weight: 700; line-height: 20px; padding-top: 46px; }
.tile-tag { position: absolute; left: 4px; bottom: 2px; height: 22px; background: #151515; border-radius: 6px; padding: 0 8px 0 5px; color: #ddd; font-size: 13.500px; display: flex; align-items: center; gap: 6px; white-space: nowrap; }
.tile-tag:not(:has(svg)) { padding-left: 8px; }
.next-page { position: absolute; left: 985px; top: 51px; width: 32px; height: 32px; border-radius: 50%; background: #0e71eb; border: 2px solid #fff; display: flex; align-items: center; justify-content: center; padding-left: 2px; }
.view-btn { position: absolute; right: 8px; top: 8px; width: 62px; height: 30px; background: #222; border-radius: 5px; color: #ddd; font-size: 12.500px; display: flex; align-items: center; justify-content: center; gap: 5px; }

/* shared screen, word 2007 */
.share { height: 620px; flex: none; position: relative; background: #6690cc; }
.share-video { height: 100%; display: flex; flex-direction: column; overflow: hidden; filter: blur(.35px); font-family: "Liberation Sans", sans-serif; color: #15428b; }
.w-title { height: 24px; flex: none; background: linear-gradient(#e0e6ef, #cfdcee); display: flex; align-items: flex-start; position: relative; color: #8a97a8; }
.office-btn { position: absolute; left: 2px; top: 1px; width: 36px; height: 36px; border-radius: 50%; background: #4c4c4c; border: 3px solid #e2e6ec; display: flex; align-items: center; justify-content: center; z-index: 2; box-shadow: 0 0 2px #667; }
.qat { margin: 3px 0 0 46px; display: flex; align-items: flex-start; gap: 5px; width: 72px; height: 20px; }
.qat svg { margin-top: 1px; }
.qat-redo { margin-left: 10px; }
.rec { position: absolute; left: 48px; top: 12px; color: #fff; font-size: 13px; line-height: 15px; display: flex; align-items: center; gap: 13px; z-index: 3; }
.rec i { width: 12px; height: 12px; border-radius: 50%; background: #c9433a; }
.w-ctrl { margin-left: auto; display: flex; gap: 24px; font-size: 11px; line-height: 14px; padding: 1px 10px 0 0; color: #9aa6b6; }
.w-tabs { height: 20px; flex: none; background: #bfdbff; display: flex; align-items: stretch; padding-left: 43px; font-size: 9.700px; position: relative; }
.w-tab { padding: 0 12.500px; display: flex; align-items: center; color: #15428b; }
.w-tab-on { width: 45px; justify-content: center; padding: 0; background: linear-gradient(#f4f8fe, #dbe8f9); border: 1px solid #a7c0e0; border-bottom: 0; border-radius: 3px 3px 0 0; margin-right: 2.500px; }
.w-help { position: absolute; right: 3px; top: 3px; width: 14px; height: 14px; border-radius: 50%; background: #3c6fc4; border: 1px solid #dce8f8; color: #fff; font-size: 10px; font-weight: 700; line-height: 12px; text-align: center; }

.ribbon { height: 79px; flex: none; background: linear-gradient(#d5e4f8, #bcd3f0); display: flex; align-items: stretch; gap: 3px; padding: 1px 1px 2px; font-size: 9.500px; }
.grp { flex: none; display: flex; flex-direction: column; border: 1px solid #b5cbe6; border-radius: 3px; background: linear-gradient(#dee9f9 0%, #d2e2f6 60%, #c5d9f1 100%); overflow: hidden; }
.grp-body { flex: 1; min-height: 0; }
.grp-label { height: 15px; flex: none; background: #c1d8f0; text-align: center; line-height: 15px; color: #4f74a3; position: relative; }
.lab-l { padding-right: 15px; }
.launcher { position: absolute; right: 4px; top: 4px; width: 7px; height: 7px; border-right: 1px solid #5a7ba8; border-bottom: 1px solid #5a7ba8; }
.grp-clip { width: 135px; }
.grp-font { width: 227px; }
.grp-para { width: 181px; margin-left: 1px; }
.grp-styles { width: 565px; margin-left: 1px; }
.grp-edit { width: 65px; }
.clip-body { display: flex; padding: 3px 0 0 9px; gap: 10px; }
.paste { display: flex; flex-direction: column; align-items: center; color: #8d99a8; gap: 0; width: 28px; }
.clip-list { display: flex; flex-direction: column; gap: 4px; line-height: 15px; white-space: nowrap; }
.clip-list span { display: flex; align-items: center; gap: 3px; }
.clip-list .off { color: #8d99a8; }

.tools { display: flex; flex-direction: column; gap: 6px; padding: 8px 0 0 3px; }
.tool-row { display: flex; gap: 3px; height: 19px; align-items: stretch; }
.combo { background: linear-gradient(#f7fafe, #e5eefa); border: 1px solid #b5cbe6; color: #222; display: flex; align-items: center; padding: 0 2px; position: relative; white-space: nowrap; font-size: 10px; }
.combo i { position: absolute; right: 3px; top: 7px; border: 3px solid transparent; border-top: 3px solid #445; border-bottom: 0; }
.combo-font { width: 118px; margin-right: -2px; }
.combo-size { width: 36px; }
.btns { display: flex; border: 1px solid #b0c6e2; border-radius: 3px; background: linear-gradient(#eaf2fc, #cfdff4); color: #22344e; }
.btns b { width: 19px; flex: none; padding: 0; display: flex; align-items: center; justify-content: center; border-right: 1px solid #c2d4ea; font-weight: 700; font-size: 10px; position: relative; }
.btns b:last-child { border-right: 0; }
.btns b.on { background: linear-gradient(#fde5a9, #fbc469); }
.btns sup, .btns sub { font-size: 6px; line-height: 0; }
.w23 b { width: 22.600px; }
.w28 b { width: 28px; }
.w18 b { width: 18.500px; }
.w20 b { width: 19.750px; }
.w26 b { width: 26px; }
.dd { justify-content: flex-start !important; padding-left: 3px !important; }
.dd::after { content: ""; position: absolute; right: 2px; top: 8px; border: 2.500px solid transparent; border-top: 3px solid #5a6f8c; border-bottom: 0; }
.serif { font-family: "Liberation Serif", serif; font-size: 11px !important; }
.it { font-style: italic; }
.un { text-decoration: underline; }
.st { text-decoration: line-through; }
.big-a { font-family: "Liberation Serif", serif; font-size: 14px !important; }
.small-a { font-family: "Liberation Serif", serif; font-size: 11px !important; }
.clear-f { font-size: 8px !important; }
.hl span { border-bottom: 3px solid #ffee00; line-height: 12px; padding: 0 3px; }
.fc span { border-bottom: 3px solid #e0101a; line-height: 12px; padding: 0 4px; color: #1b3a78; font-size: 12px; }
.sort { font-size: 9px !important; color: #2a55b0; }
.pilcrow { font-size: 13px !important; }
.border-b { font-weight: 400 !important; }

.styles-body { display: flex; gap: 6.700px; padding: 8px 0 0 4px; position: relative; }
.style-tile { width: 56px; height: 42px; background: #fff; display: flex; flex-direction: column; align-items: center; overflow: hidden; flex: none; }
.st-sel { width: 62px; height: 47px; margin-top: -3px; border: 2px solid #d8a24d; background: linear-gradient(#fff 90%, #fde8a6); margin-right: -3px; padding-top: 2px; }
.s-sample { height: 27px; display: flex; align-items: center; white-space: nowrap; font-family: "Liberation Serif", serif; color: #222; font-size: 12px; }
.s-plain { font-size: 11.500px; font-family: "Liberation Sans", sans-serif; }
.s-h1 { font-size: 17px; font-weight: 700; color: #2e5a9c; }
.s-h2 { font-size: 20px; color: #111; }
.s-h3 { font-size: 14px; color: #4a7ebb; font-weight: 700; }
.s-h4 { font-size: 13.500px; color: #4a7ebb; font-weight: 700; font-style: italic; }
.s-h5 { font-size: 13.500px; color: #3a4a5c; }
.s-title { font-size: 31px; color: #263b56; height: 27px; line-height: 27px; }
.s-name { color: #15428b; font-size: 9.500px; white-space: nowrap; line-height: 13px; }
.style-scroll { width: 11px; flex: none; display: flex; flex-direction: column; margin: -1px 0 0 -2px; height: 45px; gap: 1px; }
.style-scroll i { flex: 1; background: #d8e5f6; border: 1px solid #b5cbe6; font-size: 7px; line-height: 12px; text-align: center; color: #6a7f9a; }
.change-styles { width: 44px; flex: none; display: flex; flex-direction: column; align-items: center; margin-left: -7px; margin-top: -4px; text-align: center; line-height: 11px; color: #4f6f9c; font-size: 9.500px; }
.cs-a { font: bold 28px "Liberation Sans", sans-serif; fill: #c0569f; }
.cs-b { font: bold 28px "Liberation Sans", sans-serif; fill: #4a7ebb; }
.edit-list { display: flex; flex-direction: column; gap: 4px; padding: 2px 0 0 4px; color: #4f6f9c; line-height: 15px; white-space: nowrap; }
.edit-list span { display: flex; align-items: center; gap: 3px; }

.w-work { flex: 1; min-height: 0; display: flex; justify-content: flex-start; background: linear-gradient(#a9c3ec 0%, #8fadda 30%, #6d90c2 55%, #567eb2 70%, #5f86c0 85%, #6690cc 100%); position: relative; }
.doc { width: 571px; margin: 4px 0 0 304px; padding: 25px 69px 0 67px; background: #fff; box-shadow: 2px 0 2px rgba(40,60,100,.5), -1px 0 1px rgba(40,60,100,.4); color: #111; font: bold 15px/25.700px "Liberation Serif", serif; overflow: hidden; }
.doc p { margin: 0; height: 25.700px; white-space: pre; }
.doc small { font-size: 8.500px; }
.right { text-align: right; }
.r2 { padding-right: 2px; }
.spread { display: flex; justify-content: space-between; }
.sq { text-decoration: underline wavy #3a9a4a 1px; text-underline-offset: 2px; }
.w-scroll { margin-left: auto; width: 15px; display: flex; flex-direction: column; background: #a9c3ec; color: #222; }
.ws-split { height: 6px; flex: none; border-top: 1px solid #456; margin: 5px 2px 0; }
.ws-track { flex: 1; display: flex; flex-direction: column; align-items: center; background: linear-gradient(#8fadd8, #7e9ec8); margin-top: 8px; }
.ws-up { margin-top: 7px; border: 4px solid transparent; border-bottom: 3px solid #335; border-top: 0; }
.ws-thumb { width: 13px; height: 7px; margin-top: 19px; background: #dfe8f6; border: 1px solid #8a9dbc; }
.ws-down { margin-top: auto; margin-bottom: 4px; border: 4px solid transparent; border-top: 3px solid #335; border-bottom: 0; }
.ws-nav { height: 45px; flex: none; display: flex; flex-direction: column; align-items: center; justify-content: space-around; font-size: 7px; line-height: 8px; }
.w-status { height: 4px; flex: none; background: linear-gradient(#dfe9f8, #b9d0ee); }

.share-bar { position: absolute; left: 453px; top: -6px; display: flex; height: 23px; line-height: 23px; z-index: 4; white-space: nowrap; font-family: "DejaVu Sans", sans-serif; }
.share-msg { width: 243px; background: #21c95a; color: #0d1d11; text-align: center; font-size: 11.300px; }
.share-opts { width: 106px; background: #1d1d1d; color: #eee; border-radius: 0 0 4px 0; display: flex; align-items: center; justify-content: center; gap: 5px; font-size: 11.300px; }
.cursor { position: absolute; left: 447px; top: 25px; z-index: 4; }

/* zoom bottom bar */
.zbar { flex: 1; background: #232426; display: flex; align-items: stretch; color: #b4b4b4; font-size: 12.500px; position: relative; }
.zb-item { flex: none; display: flex; flex-direction: column; align-items: center; position: relative; padding-top: 5px; }
.zb-item > svg { height: 24px; }
.zb-item span { line-height: 15px; margin-top: 2px; white-space: nowrap; }
.zb-caret { position: absolute; top: 10px; font-size: 12px; line-height: 12px; color: #ddd; }
.zb-mic { width: 64px; margin-left: 18px; }
.zb-mic .zb-caret { right: 0; }
.zb-video { width: 80px; margin-left: 11px; }
.zb-video .zb-caret { right: 4px; }
.zb-part { width: 80px; margin-left: 258px; }
.zb-part .zb-caret { right: -17px; }
.zb-part-icon { display: flex; align-items: center; height: 24px; gap: 5px; margin-left: 18px; }
.zb-part-icon em { font-size: 12.500px; }
.zb-chat { width: 60px; margin-left: 34px; }
.zb-screen { width: 100px; margin-left: 9px; color: #21c95a; }
.zb-rec { width: 60px; margin-left: 10px; }
.zb-react { width: 80px; margin-left: 8px; }
.zb-react > svg { margin-top: -2px; height: 26px; }
.leave { width: 78px; height: 28px; margin: 12px 0 0 228px; border: 0; border-radius: 4px; background: #e02828; color: #fff; font: 700 12.500px "Noto Sans", sans-serif; padding: 0; }
```
